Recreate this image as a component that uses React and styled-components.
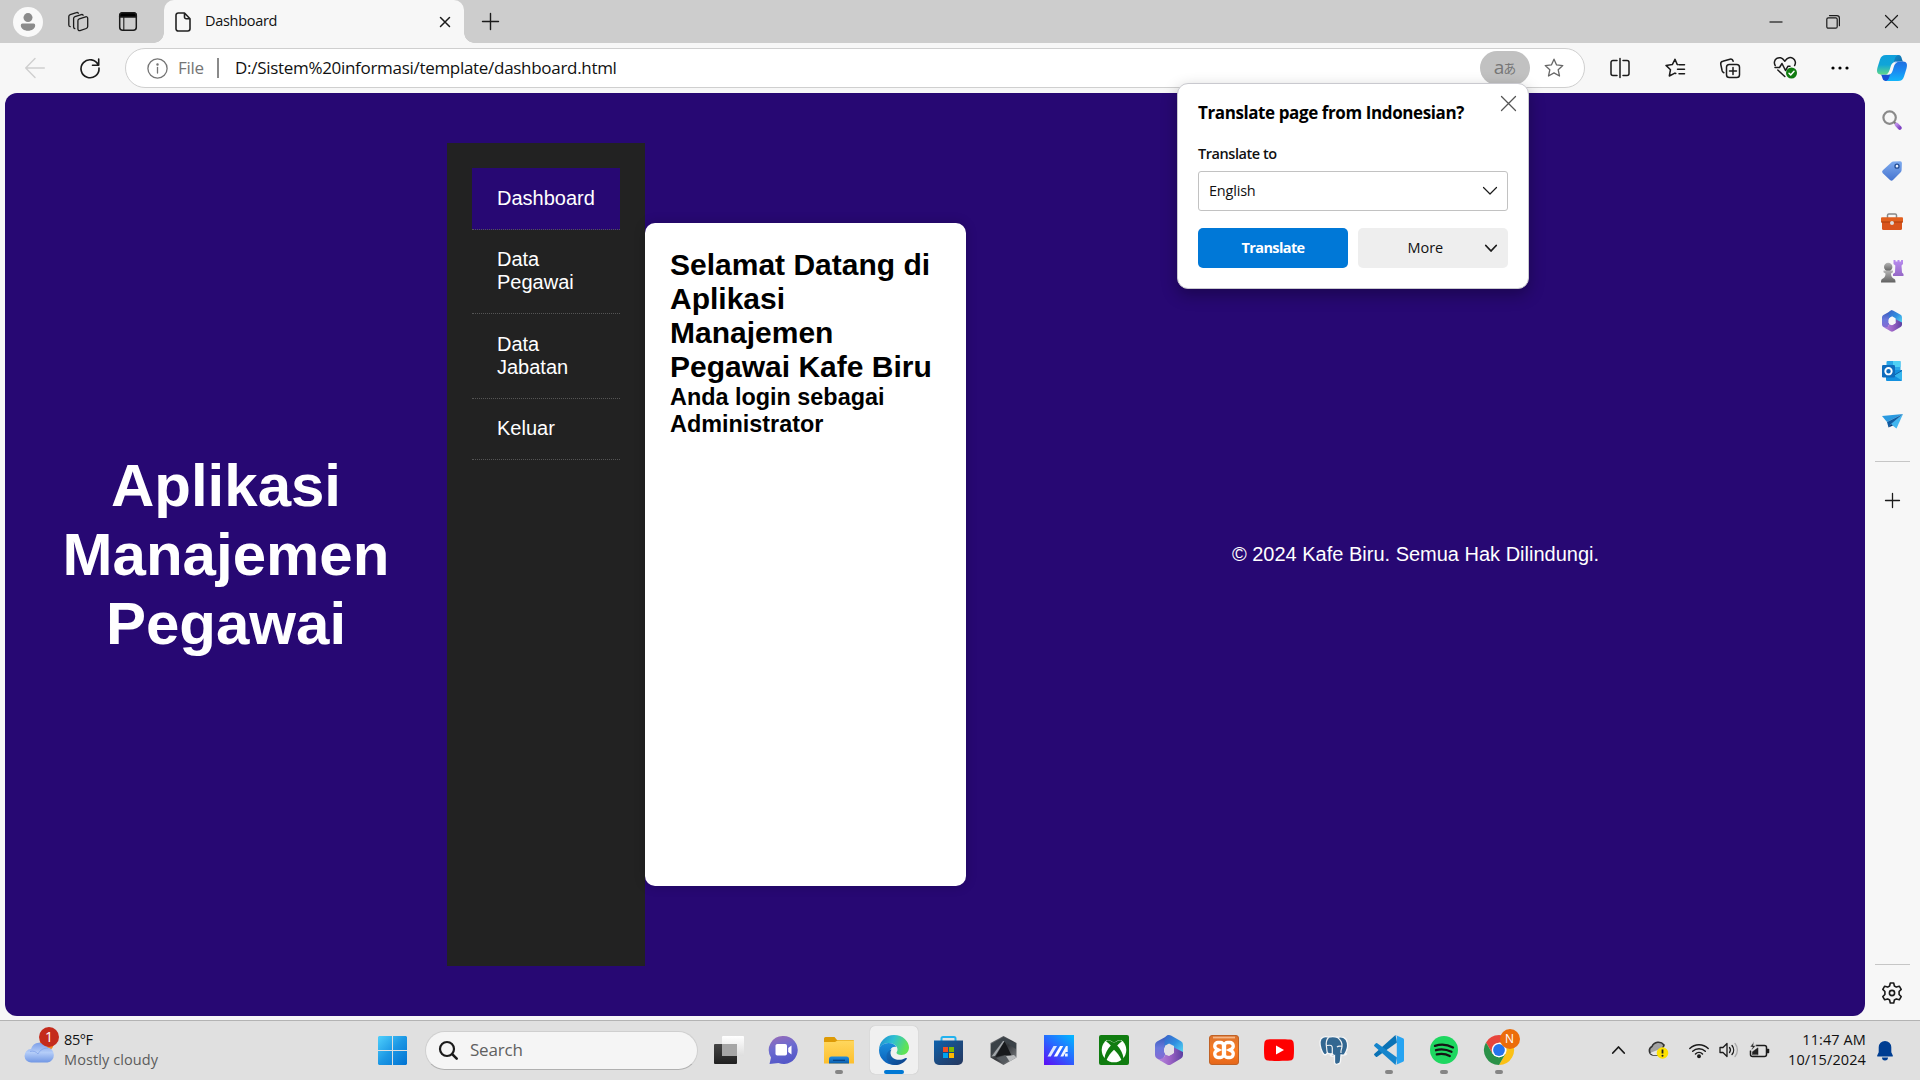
import React from "react";
import styled, { createGlobalStyle, css } from "styled-components";

const ui = `"Open Sans", "Noto Sans", sans-serif`;
const arial = `"Liberation Sans", Arial, sans-serif`;

const GlobalStyle = createGlobalStyle`
  * { box-sizing: border-box; }
  body { margin: 0; overflow: hidden; background: #f7f7f7; }
  h1, h2, h3, p, ul { margin: 0; padding: 0; }
`;

const Screen = styled.div`
  position: relative;
  width: 1920px;
  height: 1080px;
  display: flex;
  flex-direction: column;
  background: #f7f7f7;
  font-family: ${ui};
  color: #111;
`;

const Label = styled.span`
  font-size: ${(p) => p.$size || 15}px;
  font-weight: ${(p) => p.$weight || 400};
  letter-spacing: ${(p) => p.$track || 0}px;
  color: ${(p) => p.$color || "#111"};
  line-height: 20px;
  white-space: nowrap;
`;

const Svg = styled.svg`
  display: block;
  flex: none;
  overflow: visible;
`;

/* ---------- line icons ---------- */

const Line = ({ w = 20, h = w, color = "#1b1b1b", sw = 1.4, children }) => (
  <Svg width={w} height={h} viewBox={`0 0 ${w} ${h}`} fill="none" stroke={color} strokeWidth={sw} strokeLinecap="round" strokeLinejoin="round">
    {children}
  </Svg>
);

const Art = ({ w = 30, h = w, children }) => (
  <Svg width={w} height={h} viewBox={`0 0 ${w} ${h}`}>{children}</Svg>
);

/* ---------- title bar ---------- */

const TitleBar = styled.header`
  height: 43px;
  display: flex;
  background: #cdcdcd;
`;

const TitleCell = styled.div`
  width: ${(p) => p.$w}px;
  height: 43px;
  display: flex;
  align-items: center;
  justify-content: center;
`;

const Avatar = styled.div`
  width: 30px;
  height: 30px;
  border-radius: 50%;
  background: #f9f9f9;
  display: flex;
  align-items: center;
  justify-content: center;
`;

const Tab = styled.div`
  position: relative;
  width: 300px;
  height: 43px;
  margin-left: 7px;
  padding: 0 12px 0 11px;
  display: flex;
  align-items: center;
  border-radius: 10px 10px 0 0;
  background: #f7f7f7;
  &::before, &::after {
    content: "";
    position: absolute;
    bottom: 0;
    width: 10px;
    height: 10px;
  }
  &::before {
    left: -10px;
    background: radial-gradient(circle at 0 0, transparent 9.5px, #f7f7f7 10px);
  }
  &::after {
    right: -10px;
    background: radial-gradient(circle at 100% 0, transparent 9.5px, #f7f7f7 10px);
  }
`;

const TabTitle = styled.div`
  flex: 1;
  display: flex;
  padding: 0 0 1px 14px;
`;

const Spacer = styled.div`
  flex: 1;
`;

const TabStrip = () => (
  <TitleBar>
    <TitleCell $w={56}>
      <Avatar>
        <Art w={16} h={18}>
          <circle cx="8" cy="4.6" r="4.5" fill="#8b8b8b" />
          <path d="M2.4 10.5h11.2a1.8 1.8 0 0 1 1.6 1.8c0 3.300-3.400 5.500-7.200 5.500s-7.200-2.200-7.200-5.500a1.800 1.800 0 0 1 1.600-1.800z" fill="#8b8b8b" />
        </Art>
      </Avatar>
    </TitleCell>
    <TitleCell $w={43}>
      <Line w={22} h={20} sw={1.3}>
        <path d="m12.300 6.800 6.300-2a1.600 1.600 0 0 1 2.100 1.500v8.300a2 2 0 0 1-1.400 1.900l-6.300 2.100a1.600 1.600 0 0 1-2.100-1.500V8.700a2 2 0 0 1 1.400-1.900z" />
        <path d="M7.800 16.700a1.600 1.600 0 0 1-1.200-1.600V6.500A2 2 0 0 1 8 4.600l6.300-2a1.600 1.600 0 0 1 1.800.6" />
        <path d="M3.200 14.700a1.600 1.600 0 0 1-1.400-1.600V4.500a2 2 0 0 1 1.400-1.900l6.200-2a1.600 1.600 0 0 1 1.900.6" />
      </Line>
    </TitleCell>
    <TitleCell $w={58}>
      <Line w={18} h={19} sw={1.500}>
        <rect x=".7" y=".7" width="16.600" height="17.600" rx="3" />
        <path d="M.7 5V3.700a3 3 0 0 1 3-3h10.600a3 3 0 0 1 3 3V5z" fill="#000" />
        <path d="M4.800 5v13" strokeWidth="1.100" />
      </Line>
    </TitleCell>
    <Tab>
      <Line w={16} h={20} sw={1.6} color="#222">
        <path d="M9.500 1H3.200A2.200 2.200 0 0 0 1 3.200v13.600A2.200 2.200 0 0 0 3.200 19h9.600a2.200 2.200 0 0 0 2.200-2.200V6.700zM9.500 1v4a1.700 1.700 0 0 0 1.700 1.700H15" />
      </Line>
      <TabTitle><Label $size={14.5} $track={-0.3}>Dashboard</Label></TabTitle>
      <TitleCell $w={15}>
        <Line w={10} sw={1.5}><path d="m.5.500 9 9M9.500.500l-9 9" /></Line>
      </TitleCell>
    </Tab>
    <TitleCell $w={53}>
      <Line w={17} sw={1.4}><path d="M8.500.500v16M.5 8.500h16" /></Line>
    </TitleCell>
    <Spacer />
    <TitleCell $w={57}><Line w={14} sw={1.2}><path d="M.5 7h13" strokeLinecap="butt" /></Line></TitleCell>
    <TitleCell $w={58}>
      <Line w={14} sw={1.2}>
        <rect x=".8" y="2.800" width="10.400" height="10.400" rx="1.500" />
        <path d="M3.500.600h7.300a2.600 2.600 0 0 1 2.600 2.600v7.500" />
      </Line>
    </TitleCell>
    <TitleCell $w={58}><Line w={13} sw={1.2}><path d="m.5.500 12 12M12.500.500l-12 12" /></Line></TitleCell>
  </TitleBar>
);

/* ---------- toolbar ---------- */

const Workspace = styled.div`
  height: 977px;
  display: flex;
`;

const MainColumn = styled.div`
  width: 1865px;
  display: flex;
  flex-direction: column;
`;

const Toolbar = styled.nav`
  height: 50px;
  display: flex;
  align-items: center;
`;

const ToolCell = styled.div`
  width: ${(p) => p.$w || 55}px;
  flex: none;
  height: 50px;
  display: flex;
  align-items: center;
  justify-content: center;
`;

const AddressBar = styled.div`
  width: 1460px;
  flex: none;
  height: 40px;
  margin-right: 7px;
  padding: 0 20px 0 21px;
  border: 1px solid #cfcfcf;
  border-radius: 20px;
  background: #fff;
  display: flex;
  align-items: center;
`;

const SchemeDivider = styled.div`
  width: 2px;
  height: 20px;
  margin: 0 16px 0 14px;
  background: #8a8a8a;
`;

const TranslatePill = styled.div`
  width: 50px;
  height: 34px;
  margin-right: 14px;
  border-radius: 17px;
  background: #c1c1c1;
  display: flex;
  align-items: center;
  justify-content: center;
  padding-bottom: 3px;
  color: #777;
  font: 19px/20px "Open Sans", sans-serif;
`;

const Kana = styled.span`
  font: 13px/20px "Noto Sans CJK JP", sans-serif;
  margin-left: -1px;
  padding-top: 2px;
`;

const AddressFile = styled.div`
  display: flex;
  width: 25px;
  margin-left: 10px;
`;

const starPath = "M10 1.200l2.600 5.700 6.200.7-4.600 4.200 1.300 6.200L10 14.900 4.500 18l1.300-6.200L1.200 7.600l6.200-.7z";

const BrowserToolbar = () => (
  <Toolbar>
    <ToolCell $w={70}>
      <Line w={20} color="#cfcfcf" sw={1.4}><path d="M.7 10h18.600M10 .500.700 10l9.300 9.500" /></Line>
    </ToolCell>
    <ToolCell $w={40}>
      <Line w={20} sw={1.6}><path d="M18.300 7.200A9 9 0 1 0 19 10M18.700 1v6.200h-6.200" /></Line>
    </ToolCell>
    <ToolCell $w={15} />
    <AddressBar>
      <Line w={21} color="#757575" sw={1.300}>
        <circle cx="10.500" cy="10.500" r="9.600" />
        <path d="M10.500 9.500v5.500" />
        <circle cx="10.500" cy="6.400" r=".6" fill="#757575" />
      </Line>
      <AddressFile><Label $size={17} $color="#757575" $track={-0.3}>File</Label></AddressFile>
      <SchemeDivider />
      <Label $size={17} $track={-0.3}>D:/Sistem%20informasi/template/dashboard.html</Label>
      <Spacer />
      <TranslatePill>a<Kana>あ</Kana></TranslatePill>
      <Line w={20} color="#666" sw={1.300}><path d={starPath} /></Line>
    </AddressBar>
    <ToolCell>
      <Line w={20} sw={1.500}>
        <path d="M10 .500v19M7 2.500H3a2 2 0 0 0-2 2v11a2 2 0 0 0 2 2h4M13 2.500h4a2 2 0 0 1 2 2v11a2 2 0 0 1-2 2h-4" />
      </Line>
    </ToolCell>
    <ToolCell>
      <Line w={20} sw={1.500}>
        <path d="M12.700 6.700 12.200 6.400 10 1.300 7.300 6.600l-6.300.8 4.500 4.300-1.200 6.300 5.600-2.900.9.400M14 6.700h5.500M12.500 11.200h7M14 15.700h5.500" />
      </Line>
    </ToolCell>
    <ToolCell>
      <Line w={20} sw={1.500}>
        <rect x="6.500" y="6.500" width="13" height="13" rx="2.800" />
        <path d="M13 9.500v7M9.500 13h7M3.900 14.800A3 3 0 0 1 2.200 13L.8 6.500a2.700 2.700 0 0 1 2-3.200L10 1.200a2.700 2.700 0 0 1 3.200 2" />
      </Line>
    </ToolCell>
    <ToolCell>
      <Line w={22} sw={1.500}>
        <path d="M1.200 8.500A5 5 0 0 1 9.800 3l1 1.200 1-1.200a5 5 0 0 1 8.800 5.500M1 10.500h4.500l2.500-4 3.500 7 2.500-4.300h2M3.800 13l7 6.500" />
        <circle cx="17.500" cy="16" r="5.500" fill="#107c10" stroke="none" />
        <path d="m15 16.200 1.700 1.700 3.300-3.600" stroke="#fff" />
      </Line>
    </ToolCell>
    <ToolCell>
      <Art w={18} h={4}><circle cx="2" cy="2" r="1.600" /><circle cx="9" cy="2" r="1.600" /><circle cx="16" cy="2" r="1.600" /></Art>
    </ToolCell>
  </Toolbar>
);

/* ---------- web page ---------- */

const Page = styled.main`
  width: 1860px;
  height: 923px;
  margin-left: 5px;
  border-radius: 12px;
  background: #270873;
  display: flex;
  align-items: center;
  font-family: ${arial};
  font-size: 20px;
`;

const PageHeader = styled.header`
  width: 442px;
  padding: 25px 50px;
  text-align: center;
  color: #fff;
`;

const PageTitle = styled.h1`
  font-size: 60px;
  line-height: 69px;
`;

const Menu = styled.ul`
  width: 198px;
  height: 823px;
  padding: 25px;
  background: #222;
  list-style: none;
`;

const MenuItem = styled.li`
  padding: 18.75px 25px;
  line-height: 23px;
  color: #fff;
  border-bottom: 1px dotted #555;
  ${(p) => p.$active && css`
    background: #270873;
  `}
`;

const Card = styled.section`
  width: 321px;
  height: 663px;
  padding: 25px;
  border-radius: 10px;
  background: #fff;
  box-shadow: 0 0 12px rgba(0, 0, 0, 0.2);
  color: #000;
`;

const CardTitle = styled.h2`
  font-size: 30px;
  line-height: 34px;
`;

const CardSubtitle = styled.h3`
  font-size: 23.4px;
  line-height: 27px;
`;

const PageFooter = styled.footer`
  flex: 1;
  text-align: center;
  color: #fff;
  line-height: 23px;
`;

const menu = ["Dashboard", "Data Pegawai", "Data Jabatan", "Keluar"];

const WebPage = () => (
  <Page>
    <PageHeader><PageTitle>Aplikasi Manajemen Pegawai</PageTitle></PageHeader>
    <Menu>
      {menu.map((item, i) => <MenuItem key={item} $active={i === 0}>{item}</MenuItem>)}
    </Menu>
    <Card>
      <CardTitle>Selamat Datang di Aplikasi Manajemen Pegawai Kafe Biru</CardTitle>
      <CardSubtitle>Anda login sebagai Administrator</CardSubtitle>
    </Card>
    <PageFooter>© 2024 Kafe Biru. Semua Hak Dilindungi.</PageFooter>
  </Page>
);

/* ---------- translate popup ---------- */

const Popup = styled.div`
  position: absolute;
  left: 1177px;
  top: 83px;
  width: 352px;
  height: 206px;
  padding: 19px 20px 0;
  border: 1px solid #c9c9cf;
  border-radius: 11px;
  background: #fff;
  box-shadow: 0 6px 16px rgba(0, 0, 0, 0.3);
  display: flex;
  flex-direction: column;
`;

const PopupClose = styled.div`
  position: absolute;
  right: 12px;
  top: 12px;
`;

const FieldLabel = styled.div`
  display: flex;
  margin: 21px 0 7px;
`;

const Select = styled.div`
  height: 40px;
  width: 310px;
  padding: 0 10px 0 10px;
  border: 1px solid #c2c2c2;
  border-radius: 3px;
  display: flex;
  align-items: center;
  justify-content: space-between;
`;

const ButtonRow = styled.div`
  display: flex;
  gap: 10px;
  margin: 17px 0 0;
`;

const Button = styled.div`
  width: 150px;
  height: 40px;
  border-radius: 5px;
  background: ${(p) => (p.$primary ? "#0078d7" : "#eeeeee")};
  display: flex;
  align-items: center;
  justify-content: ${(p) => (p.$primary ? "center" : "flex-end")};
  gap: 42px;
  padding-right: ${(p) => (p.$primary ? 0 : 11)}px;
`;

const TranslatePopup = () => (
  <Popup>
    <PopupClose><Line w={15} sw={1.300} color="#555"><path d="m.5.500 14 14M14.500.500l-14 14" /></Line></PopupClose>
    <Label $size={17} $weight={700} $track={-0.4} $color="#000">Translate page from Indonesian?</Label>
    <FieldLabel><Label $size={14.5} $weight={600} $track={-0.45}>Translate to</Label></FieldLabel>
    <Select>
      <Label $size={14.5} $track={-0.2}>English</Label>
      <Line w={14} h={8} sw={1.200}><path d="m.5.500 6.500 6.500L13.500.500" /></Line>
    </Select>
    <ButtonRow>
      <Button $primary><Label $size={14.5} $weight={700} $track={-0.6} $color="#fff">Translate</Label></Button>
      <Button>
        <Label $size={14.500} $track={-0.1}>More</Label>
        <Line w={12} h={7} sw={1.800}><path d="m.8.500 5.200 5.500L11.200.500" /></Line>
      </Button>
    </ButtonRow>
  </Popup>
);

/* ---------- colour icons ---------- */

const Gradient = ({ id, stops, x1 = 0, y1 = 0, x2 = 0, y2 = 1 }) => (
  <linearGradient id={id} x1={x1} y1={y1} x2={x2} y2={y2}>
    {stops.map((c, i) => <stop key={i} offset={i / (stops.length - 1)} stopColor={c} />)}
  </linearGradient>
);

const Copilot = () => (
  <Art w={30} h={26}>
    <defs>
      <Gradient id="cpA" stops={["#0fa0dc", "#10a5d8", "#5fd88a"]} />
      <Gradient id="cpB" stops={["#1f6fe0", "#1a8bf2", "#12b5fa"]} />
      <Gradient id="cpC" x2={1} stops={["#0f8fce", "#1263a0"]} />
    </defs>
    <path d="M21.500 0c2.300 0 2.900 2 3.500 4.200.4 1.600 1 2.300 2 2.300H19c-2 0-2.600 1.300-3.200 3l1.200-6C17.700 1.400 18.700 0 20.500 0z" fill="url(#cpC)" />
    <path d="M8.500 26c-2.300 0-2.900-2-3.500-4.200-.4-1.600-1-2.300-2-2.300h8c2 0 2.600-1.300 3.200-3l-1.200 6C12.300 24.600 11.300 26 9.500 26z" fill="#1650d4" />
    <path d="M9 0h12.500c-2 0-3 1.500-3.800 4l-3.600 11.500c-.7 2.300-1.700 4-4.300 4H4c-4 0-4.600-3-3.500-7L3 4.500C4 1.500 5.500 0 9 0z" fill="url(#cpA)" />
    <path d="M21 26H8.500c2 0 3-1.500 3.800-4l3.600-11.500c.7-2.300 1.700-4 4.300-4H26c4 0 4.600 3 3.500 7L27 21.500c-1 3-2.500 4.500-6 4.500z" fill="url(#cpB)" />
    <path d="M18.500 7.200h2.200c-3 1-3.600 3.600-4.600 7.100-1 3.600-2 5.200-5 5.200H9.200c2.500-1 3.200-3.900 4.200-7.300 1-3.400 2.100-5 5.100-5z" fill="#f7f7f7" />
  </Art>
);

const SearchTool = () => (
  <Art w={20}>
    <defs><Gradient id="st" x2={1} stops={["#b98ae6", "#8043c4"]} /></defs>
    <circle cx="7.600" cy="7.600" r="6.200" fill="none" stroke="#8a8a8a" strokeWidth="2.200" />
    <path d="m12 12 3 3" stroke="#777" strokeWidth="2" />
    <path d="m14.600 14.600 3.200 3.200" stroke="url(#st)" strokeWidth="4" strokeLinecap="round" />
  </Art>
);

const Tag = () => (
  <Art w={20}>
    <defs><Gradient id="tg" stops={["#7eabef", "#4674cf"]} /></defs>
    <path d="M11.500.600 18 .3a1.800 1.800 0 0 1 1.900 1.900l-.3 7a3 3 0 0 1-.9 2L11 19a2.200 2.200 0 0 1-3 0L.800 12.200a2 2 0 0 1 0-2.900L9.300 1.400a3 3 0 0 1 2.200-.8z" fill="url(#tg)" />
    <circle cx="15" cy="5.200" r="2" fill="#e9f1ff" stroke="#234c94" strokeWidth="1.300" />
  </Art>
);

const Toolbox = () => (
  <Art w={22} h={17}>
    <path d="M6.500 5V2.200A1.300 1.300 0 0 1 7.800 1h6.400a1.300 1.300 0 0 1 1.300 1.200V5" fill="none" stroke="#888" strokeWidth="1.500" />
    <rect x="1" y="6" width="20" height="11" rx="1.500" fill="#d9541c" />
    <rect x="0" y="4.300" width="22" height="5" rx="1" fill="#e2601f" />
    <path d="M0 9h22" stroke="#a83a0a" />
    <circle cx="11" cy="10" r="2" fill="#ddd" />
  </Art>
);

const Chess = () => (
  <Art w={22} h={23}>
    <defs>
      <Gradient id="pawn" stops={["#b5b5b5", "#606060"]} />
      <Gradient id="rook" stops={["#b98cf0", "#9568c6"]} />
    </defs>
    <path d="M12.500 0h2v1.500h2V0h2v1.500h1.500V0h2v4l-1.500 1.500.5 7 1.500 1.500v2H12v-2l2-1.500.3-7L12.500 4z" fill="url(#rook)" />
    <circle cx="7.200" cy="7" r="4.200" fill="url(#pawn)" />
    <path d="M2.500 10.500h9.400v1.800L10 13.500c0 2 .5 3.600 2.500 5 1.600.8 2 1.500 2 4H0c0-2.500.4-3.200 2-4 2-1.400 2.500-3 2.500-5l-2-1.200z" fill="url(#pawn)" />
  </Art>
);

const M365 = ({ w = 20, h = 22, id, hole = "#f7f7f7" }) => (
  <Svg width={w} height={h} viewBox="0 0 28 30">
    <defs>
      <Gradient id={`${id}a`} stops={["#3057b8", "#6a78dc", "#8a68d2"]} />
      <Gradient id={`${id}b`} x2={1} stops={["#3b62c8", "#2f8fe0", "#5ee0f5"]} />
      <Gradient id={`${id}c`} x2={1} y2={0} stops={["#b98ae0", "#9a62c4", "#5c3fa0"]} />
    </defs>
    <path d="M14 0 2 6.500a4 4 0 0 0-2 3.500v10a4 4 0 0 0 2 3.500l5 2.500 3-6V10l6-3z" fill={`url(#${id}a)`} />
    <path d="M9.500 11V5c0-3 2-5 4.500-5l2 .5L26 6.300A4 4 0 0 1 28 10v9l-9-2v-6l-5-2.500z" fill={`url(#${id}b)`} />
    <path d="M28 17v3a4 4 0 0 1-2 3.500L16 29.400a4 4 0 0 1-4 0L3 24.200c3 .3 6.500-1 7-4.700l4 1.500 5-3v-5.500z" fill={`url(#${id}c)`} />
    <path d="m14 9.800 3.800 1.800 1.200 1.700v3.600L17.500 19 14 20.500 10.300 19 9 17v-3.700l1.300-1.700z" fill={hole} />
  </Svg>
);

const Outlook = () => (
  <Art w={20}>
    <rect x="4.500" width="14" height="12" rx="1" fill="#2aa7e8" />
    <path d="M11 0h7.500v6H11z" fill="#4fd0f5" />
    <path d="M4 9h16v10a1 1 0 0 1-1 1H5a1 1 0 0 1-1-1z" fill="#1390df" />
    <path d="m20 9-8 5.500 8 5z" fill="#35b5ee" />
    <path d="M20 9.500 12.500 14" stroke="#0d5ea8" />
    <rect y="4" width="13" height="12.500" rx="1.200" fill="#0f6cbd" />
    <circle cx="6.500" cy="10.200" r="3.200" fill="none" stroke="#fff" strokeWidth="1.900" />
  </Art>
);

const Send = () => (
  <Art w={21} h={15}>
    <path d="M0 2 21 0 5 8z" fill="#2a9ae0" />
    <path d="M21 0 14.500 14.500 8.500 10z" fill="#42b6f0" />
    <path d="M21 0 5 8l1.500 5.500L9 10z" fill="#0e5ba2" />
    <path d="m6.500 13.500 4.500-2L9 10z" fill="#083a75" />
  </Art>
);

const SettingsGear = () => (
  <Line w={22} sw={1.600}>
    <circle cx="11" cy="11" r="2.600" />
    <path d="M9.300 1h3.400l.7 3 1.900 1.100 3-.9 1.900 3.200-2.100 2.100v3l2.100 2.100-1.900 3.200-3-.9-1.900 1.100-.7 3H9.300l-.7-3-1.900-1.100-3 .9-1.900-3.200 2.100-2.100v-3L1.800 7.400l1.900-3.200 3 .9L8.600 4z" />
  </Line>
);

/* ---------- sidebar ---------- */

const Sidebar = styled.aside`
  width: 54px;
  display: flex;
  flex-direction: column;
  align-items: center;
`;

const SideCell = styled.div`
  width: 54px;
  height: ${(p) => p.$h || 50}px;
  display: flex;
  align-items: center;
  justify-content: center;
`;

const SideRule = styled.div`
  width: 35px;
  height: 1px;
  background: #c6c6c6;
`;

const EdgeSidebar = () => (
  <Sidebar>
    <SideCell><Copilot /></SideCell>
    <SideCell $h={54}><SearchTool /></SideCell>
    <SideCell $h={48}><Tag /></SideCell>
    <SideCell $h={52}><Toolbox /></SideCell>
    <SideCell $h={48}><Chess /></SideCell>
    <SideCell $h={52}><M365 id="side" /></SideCell>
    <SideCell $h={48}><Outlook /></SideCell>
    <SideCell $h={53}><Send /></SideCell>
    <SideCell $h={27}><SideRule /></SideCell>
    <SideCell><Line w={15} sw={1.300}><path d="M7.500.500v14M.5 7.500h14" /></Line></SideCell>
    <Spacer />
    <SideRule />
    <SideCell $h={55}><SettingsGear /></SideCell>
  </Sidebar>
);

/* ---------- taskbar ---------- */

const Taskbar = styled.footer`
  height: 60px;
  display: flex;
  align-items: center;
  padding-bottom: 1px;
  border-top: 1px solid #b3b3b3;
  background: #e0e0e0;
`;

const Weather = styled.div`
  width: 364px;
  padding-left: 25px;
  display: flex;
  align-items: center;
`;

const WeatherText = styled.div`
  display: flex;
  flex-direction: column;
  margin-left: 9px;
  padding-bottom: 1px;
`;

const SearchBox = styled.div`
  width: 273px;
  height: 39px;
  margin: 0 4px 0 4px;
  padding-left: 13px;
  border: 1px solid #cfcfcf;
  border-bottom-color: #b0b0b0;
  border-radius: 20px;
  background: #f5f5f5;
  display: flex;
  align-items: center;
  gap: 12px;
`;

const AppCell = styled.div`
  position: relative;
  width: ${(p) => p.$w || 55}px;
  height: 58px;
  display: flex;
  align-items: center;
  justify-content: center;
`;

const AppTile = styled.div`
  width: 48px;
  height: 48px;
  border-radius: 5px;
  display: flex;
  align-items: center;
  justify-content: center;
  ${(p) => p.$active && css`
    background: #f0f0f0;
    box-shadow: 0 0 1px #aaa;
  `}
`;

const Running = styled.div`
  position: absolute;
  bottom: 5px;
  width: ${(p) => (p.$active ? 20 : 8)}px;
  height: 4px;
  border-radius: 2px;
  background: ${(p) => (p.$active ? "#0078d4" : "#858585")};
`;

const Tray = styled.div`
  display: flex;
  align-items: center;
  margin-left: auto;
`;

const TrayCell = styled.div`
  width: ${(p) => p.$w}px;
  display: flex;
  justify-content: center;
`;

const Clock = styled.div`
  width: 87px;
  padding-bottom: 1px;
  display: flex;
  flex-direction: column;
  align-items: flex-end;
`;

const BadgeText = styled.span`
  position: absolute;
  left: ${(p) => p.$x}px;
  top: ${(p) => p.$y}px;
  width: 20px;
  height: 20px;
  border-radius: 50%;
  background: ${(p) => p.$bg};
  color: #fff;
  text-align: center;
  font: ${(p) => p.$size}px/20px ${ui};
`;

const IconWrap = styled.div`
  position: relative;
  padding-bottom: ${(p) => p.$lift || 0}px;
`;

const Start = () => (
  <Art w={29}>
    <defs><Gradient id="win" x2={1} stops={["#4fd0fc", "#1c97e4", "#0072d2"]} /></defs>
    <path d="M1 0h13v14H0V1zM15 0h13l1 1v13H15zM0 15h14v14H1l-1-1zM15 15h14v13l-1 1H15z" fill="url(#win)" />
  </Art>
);

const TaskView = () => (
  <Art w={30} h={28}>
    <defs><Gradient id="tvw" stops={["#ffffff", "#dedede"]} /><Gradient id="tvd" stops={["#454545", "#202020"]} /></defs>
    <rect y="8" width="23" height="20" rx="1" fill="url(#tvd)" />
    <rect x="8" width="22" height="20" rx="1" fill="url(#tvw)" />
    <path d="M8 8h15v12H8z" fill="#a6a6a6" />
  </Art>
);

const Chat = () => (
  <Art w={29} h={28}>
    <defs><Gradient id="cht" x2={0.3} stops={["#9b6bb5", "#6c6bd0", "#5558c8"]} /></defs>
    <path d="M14.500 0a14 14 0 1 1-5 27L.5 28l1.500-6.500A14 14 0 0 1 14.500 0z" fill="url(#cht)" />
    <rect x="6.500" y="8" width="11.500" height="11.500" rx="1.800" fill="#fff" />
    <path d="m19.200 12 3.300-2.500v9l-3.300-2.500z" fill="#fff" />
  </Art>
);

const Explorer = () => (
  <Art w={30} h={28}>
    <defs><Gradient id="fld" stops={["#ffd75e", "#fdbf2d"]} /><Gradient id="fldb" stops={["#1f8de0", "#0a5cab"]} /></defs>
    <path d="M0 2.500A1.500 1.500 0 0 1 1.500 1h9L13 4H29a1 1 0 0 1 1 1v6H0z" fill="#dd9a06" />
    <path d="M0 6h11l2.500-1.500H30v23H0z" fill="url(#fld)" />
    <path d="M5 27.500V23a2.500 2.500 0 0 1 2.500-2.500h15A2.500 2.500 0 0 1 25 23v4.500z" fill="url(#fldb)" />
    <path d="M9 24.300h12" stroke="#053f80" strokeWidth="1.200" />
  </Art>
);

const Edge = () => (
  <Art>
    <defs>
      <Gradient id="eda" x2={1} y2={0.3} stops={["#1b87d2", "#2fc0d2", "#5fe356"]} />
      <Gradient id="edb" stops={["#1a8fdd", "#0a5eb8"]} />
      <Gradient id="edc" x2={1} stops={["#1470c0", "#0c3f87"]} />
    </defs>
    <path d="M0 15A15 14.800 0 0 1 15 0c9 0 15 6.500 15 12.500 0 4.500-3.200 7.500-7.500 7.500-3.500 0-5-1.300-5-2.300 0-.8 1-1.200 1-3.200C18.500 10.500 14 8 9.800 8 4.500 8 .5 11.500 0 15z" fill="url(#eda)" />
    <path d="M0 15C.5 11 4.500 8 9.500 8c4 0 7 2 8 4-5-1-7 3-6.500 6.500.500 5 5 9.500 8 10.500-2 1-3 1-4 1A15 15 0 0 1 0 15z" fill="url(#edb)" />
    <path d="M12.600 14.500c-1.200 1.500-1.300 3.500-.8 5.500 1 3 4.200 4.800 8.200 4.800 3 0 5.200-1 6.800-1.800.8-.3 1.400.3.800 1.200C25 28 20.500 30 16.500 30 11.500 30 7.500 26.500 7.500 21.500c0-4 2.500-6.500 5.100-7z" fill="url(#edc)" />
  </Art>
);

const Store = () => (
  <Art w={29} h={29}>
    <defs><Gradient id="sto" x2={1} stops={["#0d62ae", "#1c4a80", "#25375e"]} /></defs>
    <path d="M7.500 6V2.500A1.500 1.500 0 0 1 9 1h11a1.500 1.500 0 0 1 1.500 1.500V6" fill="none" stroke="#22b2ee" strokeWidth="2" />
    <path d="M0 4.500h29V24a5 5 0 0 1-5 5H5a5 5 0 0 1-5-5z" fill="url(#sto)" />
    <path d="M9 11h5v5H9z" fill="#f25022" /><path d="M15 11h5v5h-5z" fill="#7fba00" />
    <path d="M9 17h5v5H9z" fill="#00a4ef" /><path d="M15 17h5v5h-5z" fill="#ffb900" />
  </Art>
);

const Armoury = () => (
  <Art w={27} h={29}>
    <defs><Gradient id="arm" x2={1} stops={["#777b80", "#34373b", "#8a8d90"]} /></defs>
    <path d="M13.500 0 26.500 7v14.500L13.500 29 .500 21.500V7z" fill="url(#arm)" />
    <path d="M13.500 1 26 8v5L13.500 5 1 19V8z" fill="#3b4248" />
    <path d="M14.500 5 22 20.500l-7-1.500-9.500 2z" fill="#17191c" />
    <path d="M14.500 5 5 20l-3.500.5L13 5z" fill="#a1a6aa" />
    <path d="m6 22 9-2.500 7 2.500-8.500 5z" fill="#555a5f" />
    <path d="m16 20 8-1 2.500 2.500-7 4z" fill="#b9bbbd" />
  </Art>
);

const MyAsus = () => (
  <Art>
    <defs><Gradient id="asu" x1={0.1} y1={1} x2={0.9} y2={0} stops={["#5a12f5", "#2965ff", "#04b3ff"]} /></defs>
    <path d="M0 0h30v30H0z" fill="url(#asu)" />
    <path d="M3.500 21.500 9.500 11H13L6.800 21.500z" fill="#dce7ff" />
    <path d="M9.800 21.500 16 11h3.200l-6 10.500z" fill="#fff" />
    <path d="m16.300 21.500 5.700-10.500h1.700V17h-1.900l-2.500 4.500zM21 18.500h2.700v3H21z" fill="#eef4ff" />
  </Art>
);

const Xbox = () => (
  <Art>
    <rect width="30" height="30" rx="2" fill="#107c10" />
    <circle cx="15" cy="15" r="12.300" fill="#fff" />
    <path d="M7 5.200c2.500-.7 5.500.8 8 2.800 2.500-2 5.500-3.500 8-2.800-1-1.500-4.500-3.500-8-3.500s-7 2-8 3.500z" fill="#107c10" />
    <path d="M11.800 10.500C8.500 14 6 18.500 5.500 23.500l1.800 2C9 21.500 12 17.500 15 14.800c3 2.700 6 6.700 7.700 10.700l1.800-2c-.5-5-3-9.500-6.300-13 1.500-1.600 3-3 4.800-4.300l-1.500-1C19 5.500 17 6.500 15 8c-2-1.500-4-2.500-6.500-2.800L7 6.200c1.800 1.300 3.300 2.700 4.800 4.300z" fill="#107c10" />
  </Art>
);

const Xampp = () => (
  <Art>
    <defs><Gradient id="xam" stops={["#d9722f", "#fa7d24", "#e5661a"]} /></defs>
    <rect x=".5" y=".5" width="29" height="29" rx="2.500" fill="url(#xam)" stroke="#c06125" />
    <path d="M4 2.500h22" stroke="#ffd2ad" strokeWidth="1.800" opacity=".7" />
    <path d="M9 7.500h2.500a3 3 0 0 1 3 3v3h1v-3a3 3 0 0 1 3-3H21a3.500 3.500 0 0 1 1.500 6.500l-2 1 2 1a3.500 3.500 0 0 1-1.500 6.500h-2.500a3 3 0 0 1-3-3v-3h-1v3a3 3 0 0 1-3 3H9A3.500 3.500 0 0 1 7.500 16l2-1-2-1A3.500 3.500 0 0 1 9 7.500z" fill="none" stroke="#fff" strokeWidth="3.300" />
  </Art>
);

const YouTube = () => (
  <Art w={30} h={22}>
    <path d="M4 .500C9 0 21 0 26 .500c2.500.2 3.500 1.500 3.700 4 .4 4 .4 9 0 13-.2 2.500-1.200 3.800-3.700 4-5 .5-17 .5-22 0-2.500-.2-3.500-1.500-3.700-4-.4-4-.4-9 0-13C.500 2 1.500.700 4 .500z" fill="#f00" />
    <path d="m12 6.500 8 4.500-8 4.500z" fill="#fff" />
  </Art>
);

const Postgres = () => (
  <Art w={29} h={29}>
    <path d="M9.500 1.200C6 0 1.500 1 1 6c-.3 4.500 2 10 3.700 12 1.300 1.500 2.500.5 3.800-1 1 1 2.500 1 4 .8.500-.2.500.2 1.300.6-.8.600-2.500.5-2.500 1 .5.900 3 .9 4.200.2V26c0 2 1.500 2.500 3 2.200 1.800-.3 3-1 3-3.200l.5-6c1.500.2 4 .2 5.500-.8.5-.7-.5-.8-1.500-.7 2-3 3-7 2.400-10.500C27.500 1 22 0 18.500 1.400c-3-1-6-1-9-.2z" fill="#336791" stroke="#f7f7f7" strokeWidth="1.300" />
    <path d="M9.500 1.500C7 4 7 8 7.500 11c.4 3 .2 4 1 6M18.500 1.500c3.200 2 5 6 4.500 9-.3 3-1.500 4-1 6.500M13.300 18.200V12c0-2.300-1.300-3.300-5.300-2.500M18 11c1.500-1.500 3.500-1 4.800-.7" fill="none" stroke="#f2f2f2" strokeWidth="1.200" />
  </Art>
);

const VSCode = () => (
  <Art>
    <path d="m21.500 0 1.500 7.500L3.200 21.700a1 1 0 0 1-1.300 0L.400 20.300a1 1 0 0 1 0-1.500z" fill="#0a72b5" />
    <path d="m21.500 30 1.500-7.500L3.200 8.300a1 1 0 0 0-1.300 0L.400 9.700a1 1 0 0 0 0 1.500z" fill="#1585cc" />
    <path d="M21.500 0 29 3.300a1.700 1.700 0 0 1 1 1.500v20.400a1.700 1.700 0 0 1-1 1.500L21.500 30c1 0 1.300-.7 1.300-1.500v-27c0-.8-.3-1.500-1.300-1.500z" fill="#27a4f2" />
  </Art>
);

const Spotify = () => (
  <Art w={28}>
    <circle cx="14" cy="14" r="14" fill="#1ed760" />
    <path d="M5 9.800c6-1.800 12.500-1.200 18 1.600M6 14.200c5-1.400 10.500-.8 15.500 1.600M6.800 18.400c4.500-1.100 9-.6 13 1.600" fill="none" stroke="#151515" strokeWidth="2.300" strokeLinecap="round" />
  </Art>
);

const Chrome = () => (
  <IconWrap>
    <Art>
      <path d="M2 7.500A15 15 0 0 1 28 7.500H15L8.500 18.700z" fill="#e8453c" />
      <path d="M28 7.500A15 15 0 0 1 15 30l6.500-11.200A7.500 7.500 0 0 0 21.500 11L15 7.500z" fill="#fbc116" />
      <path d="M2 7.500A15 15 0 0 0 15 30l6.500-11.200-6.500 3.700-6.500-3.700z" fill="#2a9148" />
      <circle cx="15" cy="15" r="7.300" fill="#fff" />
      <circle cx="15" cy="15" r="5.900" fill="#2674ec" />
    </Art>
    <BadgeText $x={16} $y={-6} $bg="#ec6d0a" $size={12}>N</BadgeText>
  </IconWrap>
);

const WeatherIcon = () => (
  <IconWrap $lift={10}>
    <Art w={30} h={36}>
      <defs><Gradient id="cld" stops={["#7e9fe8", "#b4cdf8", "#7197e4"]} /></defs>
      <circle cx="21.500" cy="17" r="7" fill="#f58220" />
      <path d="M6.500 35.500a6.500 6.500 0 0 1-.5-13.500 9 9 0 0 1 16.500-1.500 7.600 7.600 0 0 1 0 15z" fill="url(#cld)" />
      <path d="M5 24.500c3-1 6 0 8 2.500 2-4 5.500-6 10-6" stroke="#7d9fe8" fill="none" opacity=".7" />
    </Art>
    <BadgeText $x={14} $y={0} $bg="#c42b1c" $size={14}>1</BadgeText>
  </IconWrap>
);

const apps = [
  { Icon: TaskView, w: 54 },
  { Icon: Chat },
  { Icon: Explorer, running: true },
  { Icon: Edge, running: true, active: true },
  { Icon: Store },
  { Icon: Armoury },
  { Icon: MyAsus },
  { Icon: Xbox },
  { Icon: () => <M365 id="task" w={28} h={30} hole="#e2e0e6" /> },
  { Icon: Xampp },
  { Icon: YouTube },
  { Icon: Postgres },
  { Icon: VSCode, running: true },
  { Icon: Spotify, running: true },
  { Icon: Chrome, running: true },
];

const WindowsTaskbar = () => (
  <Taskbar>
    <Weather>
      <WeatherIcon />
      <WeatherText>
        <Label $size={14.5} $track={-0.4}>85°F</Label>
        <Label $size={14.5} $color="#5c5c5c" $track={0.1}>Mostly cloudy</Label>
      </WeatherText>
    </Weather>
    <AppCell $w={57}><Start /></AppCell>
    <SearchBox>
      <Line w={19} sw={2.200}><circle cx="8" cy="8" r="7" /><path d="m13.200 13.200 4.500 4.500" strokeWidth="2.600" /></Line>
      <Label $size={17} $color="#606060" $track={-0.2}>Search</Label>
    </SearchBox>
    {apps.map(({ Icon, running, active, w }, i) => (
      <AppCell key={i} $w={w}>
        <AppTile $active={active}><Icon /></AppTile>
        {running && <Running $active={active} />}
      </AppCell>
    ))}
    <Tray>
      <TrayCell $w={38}><Line w={13} h={8} sw={1.800}><path d="m.8 7 5.700-6 5.700 6" /></Line></TrayCell>
      <TrayCell $w={41}>
        <Art w={20} h={18}>
          <path d="M5 14a4.500 4.500 0 0 1-1-8.500A7 7 0 0 1 16 4l-4 10z" fill="#a2a2a2" stroke="#333" strokeWidth="1.600" />
          <path d="M2 12 17 6v8H5z" fill="#e5e5e5" />
          <circle cx="14.500" cy="12" r="5.800" fill="#fde100" />
          <path d="M14.500 8.500v4" stroke="#222" strokeWidth="1.800" /><circle cx="14.500" cy="14.700" r="1" fill="#222" />
        </Art>
      </TrayCell>
      <TrayCell $w={41}>
        <Line w={20} h={15} sw={1.500}>
          <path d="M.8 5.500a13 13 0 0 1 18.400 0M3.700 8.300a9 9 0 0 1 12.600 0M6.500 11a5 5 0 0 1 7 0" />
          <circle cx="10" cy="13.200" r="1.200" fill="#222" />
        </Line>
      </TrayCell>
      <TrayCell $w={19}>
        <Line w={20} h={16} sw={1.300}>
          <path d="M1 5.500h3l4-4v13l-4-4H1zM10.500 5.500a4 4 0 0 1 0 5M13 3.500a7 7 0 0 1 0 9" />
          <path d="M16 1.500a10 10 0 0 1 0 13" stroke="#aaa" />
        </Line>
      </TrayCell>
      <TrayCell $w={41}>
        <Line w={20} h={16} sw={1.500}>
          <path d="M7 3.500h8.500a2 2 0 0 1 2 2v7a2 2 0 0 1-2 2h-12a2 2 0 0 1-2-2V9" />
          <path d="M18 7.500h1.500v3H18z" fill="#222" />
          <path d="M3.500 12.500v-2.700l5.500-4h0v6.700z" fill="#222" strokeWidth=".5" />
          <path d="M5-.5 1 5h2.500L2 9l5-5.500H4.500z" fill="#222" stroke="#e0e0e0" strokeWidth=".6" />
        </Line>
      </TrayCell>
      <Clock>
        <Label $size={14.5} $track={0.1}>11:47 AM</Label>
        <Label $size={14.5} $track={0.1}>10/15/2024</Label>
      </Clock>
      <TrayCell $w={38}>
        <Art w={16} h={19}>
          <path d="M8 0a6.300 6.300 0 0 1 6.300 6.300v5l1.500 3.200a.6.6 0 0 1-.5.900H.700a.6.6 0 0 1-.5-.9l1.500-3.200v-5A6.300 6.300 0 0 1 8 0zM5 16.500h6a3 3 0 0 1-6 0z" fill="#003e92" />
        </Art>
      </TrayCell>
      <TrayCell $w={16} />
    </Tray>
  </Taskbar>
);

export default function App() {
  return (
    <>
      <GlobalStyle />
      <Screen>
        <TabStrip />
        <Workspace>
          <MainColumn>
            <BrowserToolbar />
            <WebPage />
          </MainColumn>
          <EdgeSidebar />
        </Workspace>
        <WindowsTaskbar />
        <TranslatePopup />
      </Screen>
    </>
  );
}
